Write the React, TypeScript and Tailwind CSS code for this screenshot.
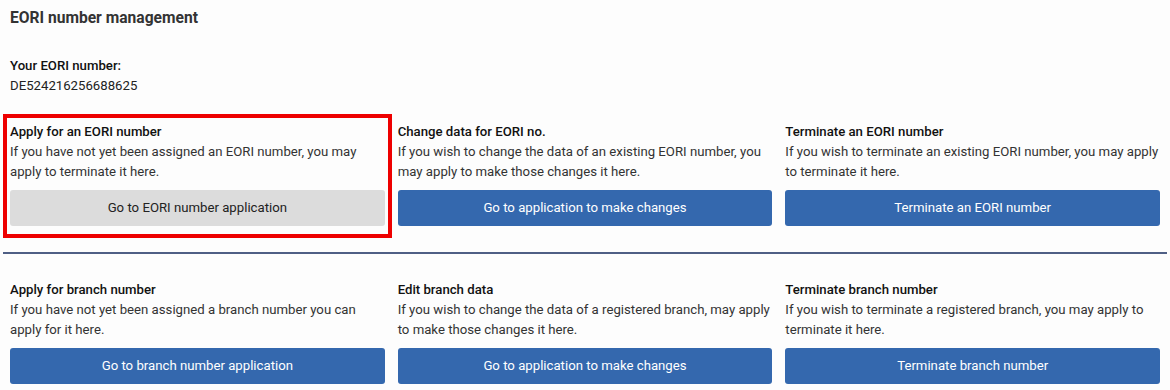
const cards = [
  {
    title: "Apply for an EORI number",
    text: "If you have not yet been assigned an EORI number, you may apply to terminate it here.",
    button: "Go to EORI number application",
    muted: true,
  },
  {
    title: "Change data for EORI no.",
    text: "If you wish to change the data of an existing EORI number, you may apply to make those changes it here.",
    button: "Go to application to make changes",
  },
  {
    title: "Terminate an EORI number",
    text: "If you wish to terminate an existing EORI number, you may apply to terminate it here.",
    button: "Terminate an EORI number",
  },
];

const branchCards = [
  {
    title: "Apply for branch number",
    text: "If you have not yet been assigned a branch number you can apply for it here.",
    button: "Go to branch number application",
  },
  {
    title: "Edit branch data",
    text: "If you wish to change the data of a registered branch, may apply to make those changes it here.",
    button: "Go to application to make changes",
  },
  {
    title: "Terminate branch number",
    text: "If you wish to terminate a registered branch, you may apply to terminate it here.",
    button: "Terminate branch number",
  },
];

type Card = { title: string; text: string; button: string; muted?: boolean };

const ActionCard = ({ card, highlight }: { card: Card; highlight?: boolean }) => {
  return (
    <div
      className={
        highlight
          ? "flex flex-col pb-[5px] outline-4 outline-solid outline-[#ee0000] outline-offset-[3px]"
          : "flex flex-col pb-[5px]"
      }
    >
      <div className="text-[13.2px] leading-[20px] font-medium text-[#111] pt-[1px]">{card.title}</div>
      <p className="text-[13.2px] leading-[20px] text-[#333] h-[39px]">{card.text}</p>
      <button
        className={
          card.muted
            ? "mt-[9px] h-[36px] w-full rounded-[3px] bg-[#dcdcdc] text-[13.2px] text-[#222]"
            : "mt-[9px] h-[36px] w-full rounded-[3px] bg-[#3468ae] text-[13.2px] text-white"
        }
      >
        {card.button}
      </button>
    </div>
  );
};

const App = () => {
  return (
    <div className="w-[1170px] h-[390px] bg-[#fdfdfd] overflow-hidden font-['Roboto','Liberation_Sans',sans-serif]">
      <h1 className="pt-[8px] px-[10px] text-[15.6px] leading-[20px] font-bold text-[#333]">
        EORI number management
      </h1>
      <div className="mt-[28px] px-[10px] text-[13.2px] text-[#222]">
        <div className="leading-[20px] font-medium text-[#111]">Your EORI number:</div>
        <div className="leading-[19px]">DE524216256688625</div>
      </div>
      <div className="mt-[26px] px-[10px] grid grid-cols-3 gap-x-[13px]">
        {cards.map((c, i) => (
          <ActionCard key={c.title} card={c} highlight={i === 0} />
        ))}
      </div>
      <div className="mt-[21px] mx-[3px] h-[2px] bg-[#4f5f85]"></div>
      <div className="mt-[25px] px-[10px] grid grid-cols-3 gap-x-[13px]">
        {branchCards.map((c) => (
          <ActionCard key={c.title} card={c} />
        ))}
      </div>
    </div>
  );
};

export default App;
